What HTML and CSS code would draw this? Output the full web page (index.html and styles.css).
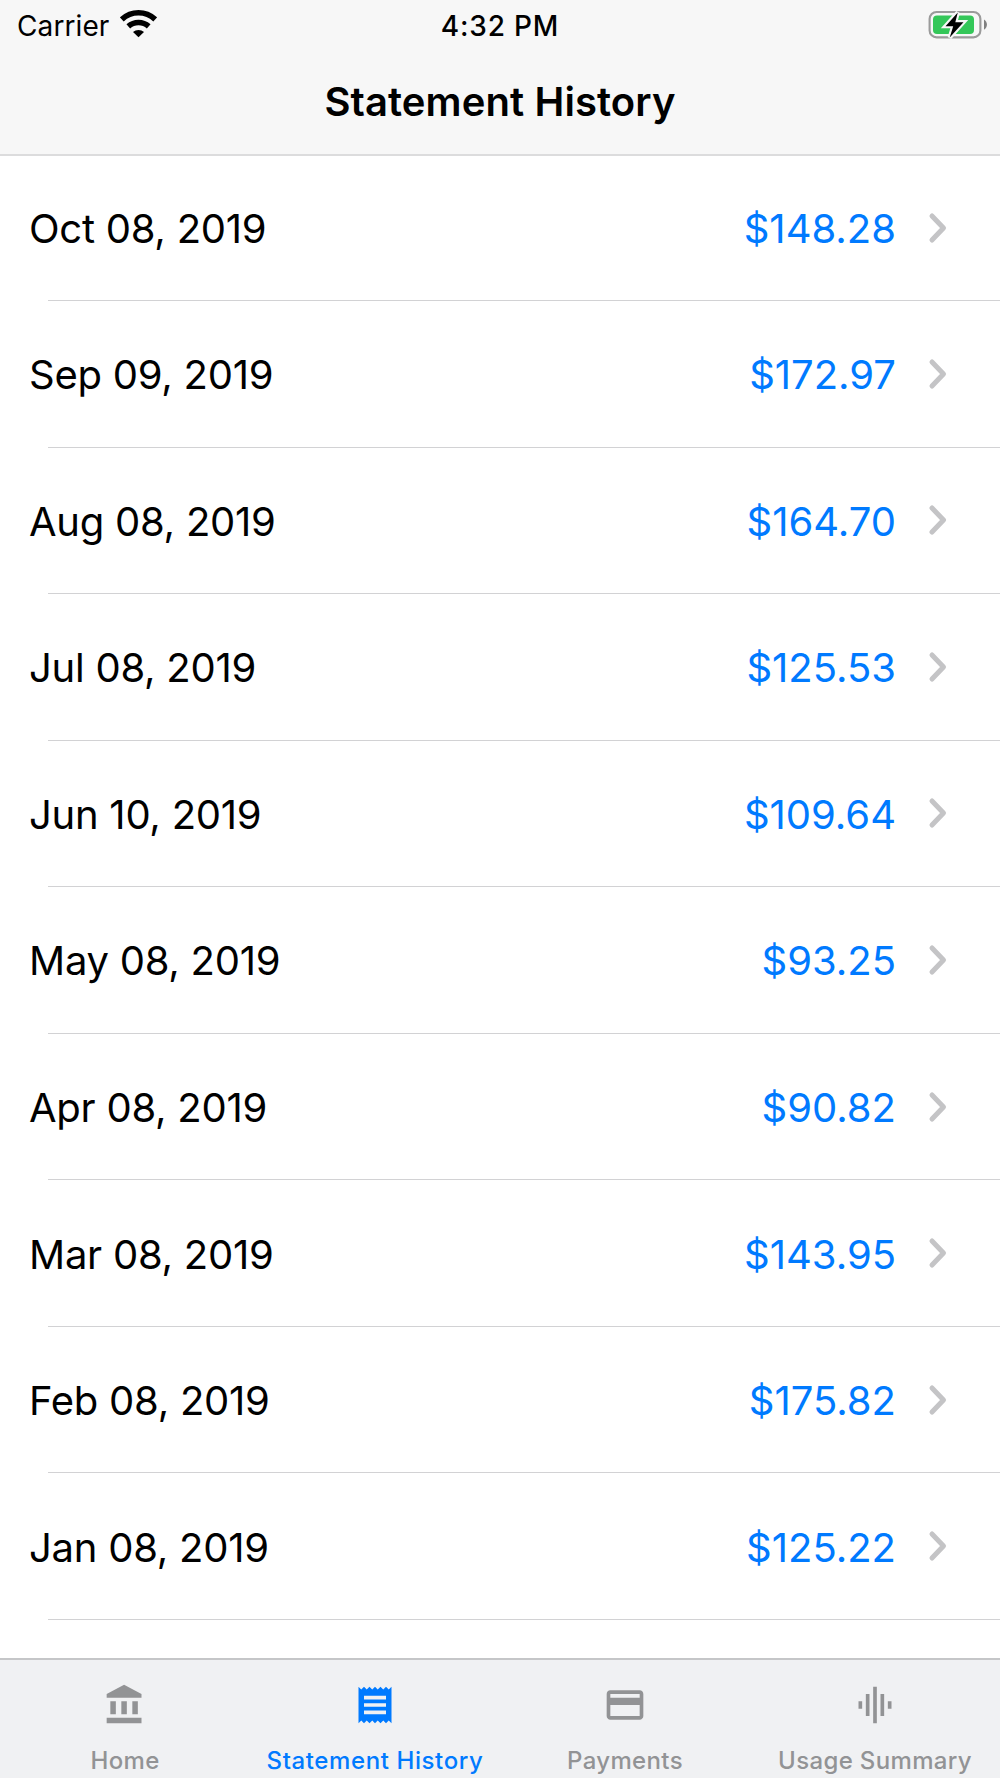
FILE: index.html
```html
<!DOCTYPE html>
<html lang="en">
<head>
  <meta charset="UTF-8">
  <title>Statement History</title>
  <link rel="stylesheet" href="styles.css">
</head>
<body>
  <!-- shared chevron -->
  <svg class="defs" width="0" height="0">
    <symbol id="chevron" viewBox="0 0 20 32">
      <path d="M4 4 L15.5 16 L4 28" fill="none" stroke="#c4c4c6" stroke-width="5" stroke-linecap="round" stroke-linejoin="round"/>
    </symbol>
  </svg>

  <div class="app">
    <header class="header">
      <div class="status-bar">
        <div class="status-left">
          <span class="carrier">Carrier</span>
          <svg class="wifi" width="37" height="28" viewBox="0 0 37 28">
            <path d="M1.800 9.400 C11.300 .6 25.700 .6 35.200 9.400" fill="none" stroke="#000" stroke-width="5.600"/>
            <path d="M8.300 16.300 C14.100 11.200 22.900 11.200 28.700 16.300" fill="none" stroke="#000" stroke-width="5.600"/>
            <path d="M13 22 C16 19.200 21 19.200 24 22 L18.500 27.300 Z"/>
          </svg>
        </div>
        <span class="time">4:32 PM</span>
        <div class="status-right">
          <svg width="60" height="30" viewBox="0 0 60 30">
            <rect x="1.6" y="2" width="50.8" height="25.4" rx="7" fill="none" stroke="#9b9b9b" stroke-width="2.1"/>
            <rect x="5" y="5.5" width="41" height="18.4" rx="4" fill="#34c759"/>
            <path d="M56 9.5 C59.9 12 59.9 17.2 56 19.7 Z" fill="#808080"/>
            <path d="M29.800 2.500 L17.500 16.200 L25.200 16.200 L21.700 27.500 L35.500 12.200 L27.300 12.200 Z" fill="#000" stroke="#f7f7f7" stroke-width="4.200" paint-order="stroke"/>
          </svg>
        </div>
      </div>
      <h1>Statement History</h1>
    </header>

    <ul class="statements">
      <li><span class="date">Oct 08, 2019</span><span class="amount">$148.28</span><svg class="chevron"><use href="#chevron"/></svg></li>
      <li><span class="date">Sep 09, 2019</span><span class="amount">$172.97</span><svg class="chevron"><use href="#chevron"/></svg></li>
      <li><span class="date">Aug 08, 2019</span><span class="amount">$164.70</span><svg class="chevron"><use href="#chevron"/></svg></li>
      <li><span class="date">Jul 08, 2019</span><span class="amount">$125.53</span><svg class="chevron"><use href="#chevron"/></svg></li>
      <li><span class="date">Jun 10, 2019</span><span class="amount">$109.64</span><svg class="chevron"><use href="#chevron"/></svg></li>
      <li><span class="date">May 08, 2019</span><span class="amount">$93.25</span><svg class="chevron"><use href="#chevron"/></svg></li>
      <li><span class="date">Apr 08, 2019</span><span class="amount">$90.82</span><svg class="chevron"><use href="#chevron"/></svg></li>
      <li><span class="date">Mar 08, 2019</span><span class="amount">$143.95</span><svg class="chevron"><use href="#chevron"/></svg></li>
      <li><span class="date">Feb 08, 2019</span><span class="amount">$175.82</span><svg class="chevron"><use href="#chevron"/></svg></li>
      <li><span class="date">Jan 08, 2019</span><span class="amount">$125.22</span><svg class="chevron"><use href="#chevron"/></svg></li>
    </ul>

    <nav class="tab-bar">
      <a class="tab">
        <svg viewBox="0 0 24 24"><path d="M4 10v7h3v-7H4zm6 0v7h3v-7h-3zM2 22h19v-3H2v3zm14-12v7h3v-7h-3zm-4.500-9L2 6v2h19V6l-9.500-5z"/></svg>
        <span>Home</span>
      </a>
      <a class="tab active">
        <svg viewBox="0 0 24 24"><path d="M18 17H6v-2h12v2zm0-4H6v-2h12v2zm0-4H6V7h12v2zM3 22l1.500-1.500L6 22l1.500-1.500L9 22l1.500-1.500L12 22l1.500-1.500L15 22l1.500-1.500L18 22l1.500-1.500L21 22V2l-1.500 1.500L18 2l-1.500 1.500L15 2l-1.500 1.500L12 2l-1.500 1.500L9 2 7.500 3.500 6 2 4.500 3.500 3 2v20z"/></svg>
        <span>Statement History</span>
      </a>
      <a class="tab">
        <svg viewBox="0 0 24 24"><path d="M20 4H4c-1.110 0-1.990.89-1.990 2L2 18c0 1.110.89 2 2 2h16c1.110 0 2-.89 2-2V6c0-1.110-.89-2-2-2zm0 14H4v-6h16v6zm0-10H4V6h16v2z"/></svg>
        <span>Payments</span>
      </a>
      <a class="tab">
        <svg viewBox="0 0 24 24"><path d="M7 18h2V6H7v12zm4 4h2V2h-2v20zm-8-8h2v-4H3v4zm12 4h2V6h-2v12zm4-8v4h2v-4h-2z"/></svg>
        <span>Usage Summary</span>
      </a>
    </nav>
  </div>
</body>
</html>
```
FILE: styles.css
```css
* {
  box-sizing: border-box;
}
body {
  margin: 0;
  font-family: Inter, "Liberation Sans", sans-serif;
  color: #000;
  background: #fff;
}
.defs {
  display: block;
}
.app {
  display: flex;
  flex-direction: column;
  width: 1000px;
  height: 1778px;
  overflow: hidden;
}

/* header */
.header {
  height: 156px;
  flex: none;
  background: #f7f7f7;
  border-bottom: 2px solid #dcdcdd;
}
.status-bar {
  display: grid;
  grid-template-columns: 1fr auto 1fr;
  align-items: center;
  height: 52px;
  padding: 0 12px;
  font-size: 28px;
  line-height: 52px;
}
.status-left {
  display: flex;
  align-items: center;
  padding-left: 5px;
}
.carrier {
  letter-spacing: 0.1px;
}
.wifi {
  margin: 0 0 5px 11px;
}
.time {
  font-weight: 500;
  letter-spacing: 0.8px;
}
.status-right {
  display: flex;
  justify-content: flex-end;
  height: 33px;
}
h1 {
  margin: 25px 0 0;
  font-size: 40px;
  font-weight: 600;
  letter-spacing: 0.1px;
  line-height: 50px;
  text-align: center;
}

/* statement list */
.statements {
  flex: 1;
  min-height: 0;
  margin: 0;
  padding: 0;
  list-style: none;
}
.statements li {
  display: flex;
  align-items: center;
  height: 146.55px;
  padding: 1px 52px 0 29px;
  font-size: 40px;
  background: linear-gradient(#d2d2d4, #d2d2d4) 48px 100% / 100% 1px no-repeat;
}
.statements li:first-child {
  height: 145px;
  padding-top: 0;
}
.date {
  letter-spacing: -0.25px;
}
.amount {
  margin-left: auto;
  color: #007aff;
}
.chevron {
  width: 20px;
  height: 32px;
  margin: 0 0 2px 32px;
}

/* bottom tabs */
.tab-bar {
  display: flex;
  flex: none;
  height: 120px;
  background: #f0f1f3;
  border-top: 2px solid #c5c6c8;
}
.tab {
  display: flex;
  flex-direction: column;
  align-items: center;
  width: 250px;
  padding-top: 23px;
  color: #929395;
  font-size: 24px;
  font-weight: 500;
  letter-spacing: 0.35px;
  line-height: 30px;
}
.tab svg {
  width: 44px;
  height: 44px;
  margin-bottom: 19px;
  fill: currentColor;
}
.active {
  color: #007aff;
  letter-spacing: 0.6px;
}
```
